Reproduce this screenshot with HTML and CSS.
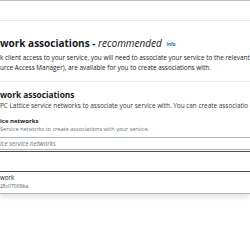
FILE: index.html
```html
<!DOCTYPE html>
<html lang="en">
<head>
    <meta charset="UTF-8">
    <meta name="viewport" content="width=device-width, initial-scale=1.0">
    <title>Service network associations</title>
    <link rel="stylesheet" href="styles.css">
</head>
<body>
    <div class="panel-top"></div>

    <div class="section">
        <h2 class="section-title">work associations - <em>recommended</em> <a class="info" href="#">Info</a></h2>
        <p class="section-desc">k client access to your service, you will need to associate your service to the relevant</p>
        <p class="section-desc">urce Access Manager), are available for you to create associations with.</p>
    </div>

    <div class="section divided">
        <h3 class="sub-title">work associations</h3>
        <p class="sub-desc">PC Lattice service networks to associate your service with. You can create associatio</p>

        <div class="field">
            <div class="field-label">ice networks</div>
            <div class="field-hint">Service networks to create associations with your service.</div>
            <div class="select-input">ice service networks</div>

            <div class="dropdown">
                <div class="option highlighted"></div>
                <div class="option">
                    <div class="option-name">work</div>
                    <div class="option-id">28c07009ba</div>
                </div>
            </div>
        </div>
    </div>
</body>
</html>
```

FILE: styles.css
```css
body {
    margin: 0;
    width: 250px;
    height: 250px;
    overflow: hidden;
    background: #ffffff;
    font-family: 'Open Sans', 'Noto Sans', sans-serif;
    color: #16191f;
    white-space: nowrap;
}
.panel-top {
    height: 19px;
    border-top: 1px solid #b9bdc1;
    border-bottom: 1px solid #e9ebed;
}
.section {
    padding-top: 16px;
}
.section-title {
    margin: 0;
    font-size: 10px;
    line-height: 12px;
    font-weight: 700;
}
.section-title em {
    font-weight: 400;
}
.info {
    font-size: 4.5px;
    font-weight: 700;
    color: #0073bb;
    text-decoration: none;
    margin-left: 2px;
    vertical-align: 1px;
}
.section-desc {
    margin: 0;
    font-size: 6.4px;
    line-height: 10px;
}
.section-title + .section-desc {
    margin-top: 3px;
}
.divided {
    margin-top: 8px;
    padding-top: 7px;
    border-top: 1px solid #e9ebed;
}
.sub-title {
    margin: 0;
    font-size: 8.3px;
    line-height: 11px;
    font-weight: 700;
}
.sub-desc {
    margin: 1px 0 0;
    font-size: 6.4px;
    line-height: 9px;
    color: #313840;
}
.field {
    margin-top: 7px;
}
.field-label {
    font-size: 6px;
    line-height: 8px;
    font-weight: 700;
}
.field-hint {
    font-size: 5.6px;
    line-height: 8px;
    color: #687078;
}
.select-input {
    margin-top: 4px;
    height: 11px;
    line-height: 11px;
    border-top: 1px solid #aab7b8;
    border-bottom: 1px solid #aab7b8;
    font-size: 6.4px;
    font-style: italic;
    color: #687078;
}
.dropdown {
    margin-top: 1px;
    border-bottom: 1px solid #aab7b8;
    box-shadow: 0 3px 5px rgba(0, 28, 36, 0.12);
}
.option.highlighted {
    height: 14px;
    border-top: 1px solid #34507d;
    border-bottom: 1px solid #34507d;
}
.option {
    padding: 2px 0 3px;
}
.option-name {
    font-size: 6.2px;
    line-height: 8px;
}
.option-id {
    font-size: 5px;
    line-height: 8px;
    color: #545b64;
}
```
